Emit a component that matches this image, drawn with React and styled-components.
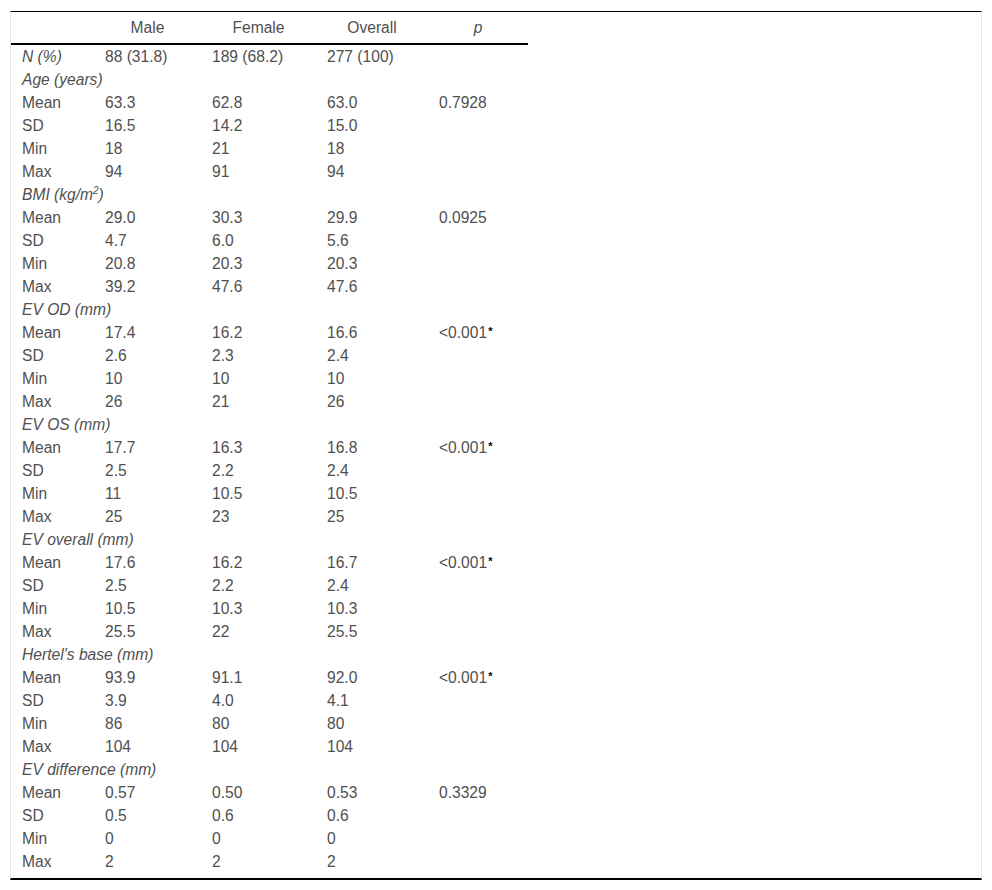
import React from "react";
import styled, { createGlobalStyle } from "styled-components";

const GlobalStyle = createGlobalStyle`
  body {
    margin: 0;
    background: #fff;
    font-family: "Liberation Sans", Arial, sans-serif;
  }
`;

const Page = styled.div`
  padding: 11px 10px;
`;

const Frame = styled.div`
  width: 970px;
  border-top: 1px solid #000;
  border-bottom: 2px solid #000;
  border-left: 1px solid #e6e6e6;
  border-right: 1px solid #e6e6e6;
  padding-bottom: 5px;
`;

const Table = styled.table`
  border-collapse: collapse;
  table-layout: fixed;
  width: 517px;
  font-size: 15.6px;
  color: #505050;
`;

const Th = styled.th`
  height: 31px;
  padding: 0;
  font-weight: normal;
  text-align: center;
  font-style: ${(p) => (p.$italic ? "italic" : "normal")};
  border-bottom: 2px solid #000;
  vertical-align: middle;
`;

const Td = styled.td`
  height: 23px;
  box-sizing: border-box;
  padding: 0 0 0 11px;
  line-height: 23px;
  white-space: nowrap;
  font-style: ${(p) => (p.$italic ? "italic" : "normal")};
`;

const Sup = styled.span`
  position: relative;
  top: -6px;
  font-size: 10px;
  line-height: 0;
`;

const Star = styled.span`
  position: relative;
  top: -3px;
  color: #000;
  font-weight: bold;
  font-size: 11px;
  line-height: 0;
  margin-left: 1px;
`;

const groups = [
  {
    title: "Age (years)",
    rows: [
      ["Mean", "63.3", "62.8", "63.0", "0.7928"],
      ["SD", "16.5", "14.2", "15.0"],
      ["Min", "18", "21", "18"],
      ["Max", "94", "91", "94"],
    ],
  },
  {
    title: (
      <>
        BMI (kg/m<Sup>2</Sup>)
      </>
    ),
    rows: [
      ["Mean", "29.0", "30.3", "29.9", "0.0925"],
      ["SD", "4.7", "6.0", "5.6"],
      ["Min", "20.8", "20.3", "20.3"],
      ["Max", "39.2", "47.6", "47.6"],
    ],
  },
  {
    title: "EV OD (mm)",
    rows: [
      ["Mean", "17.4", "16.2", "16.6", "<0.001", true],
      ["SD", "2.6", "2.3", "2.4"],
      ["Min", "10", "10", "10"],
      ["Max", "26", "21", "26"],
    ],
  },
  {
    title: "EV OS (mm)",
    rows: [
      ["Mean", "17.7", "16.3", "16.8", "<0.001", true],
      ["SD", "2.5", "2.2", "2.4"],
      ["Min", "11", "10.5", "10.5"],
      ["Max", "25", "23", "25"],
    ],
  },
  {
    title: "EV overall (mm)",
    rows: [
      ["Mean", "17.6", "16.2", "16.7", "<0.001", true],
      ["SD", "2.5", "2.2", "2.4"],
      ["Min", "10.5", "10.3", "10.3"],
      ["Max", "25.5", "22", "25.5"],
    ],
  },
  {
    title: "Hertel’s base (mm)",
    rows: [
      ["Mean", "93.9", "91.1", "92.0", "<0.001", true],
      ["SD", "3.9", "4.0", "4.1"],
      ["Min", "86", "80", "80"],
      ["Max", "104", "104", "104"],
    ],
  },
  {
    title: "EV difference (mm)",
    rows: [
      ["Mean", "0.57", "0.50", "0.53", "0.3329"],
      ["SD", "0.5", "0.6", "0.6"],
      ["Min", "0", "0", "0"],
      ["Max", "2", "2", "2"],
    ],
  },
];

function App() {
  return (
    <Page>
      <GlobalStyle />
      <Frame>
        <Table>
          <colgroup>
            <col style={{ width: 83 }} />
            <col style={{ width: 107 }} />
            <col style={{ width: 115 }} />
            <col style={{ width: 112 }} />
            <col style={{ width: 100 }} />
          </colgroup>
          <thead>
            <tr>
              <Th />
              <Th>Male</Th>
              <Th>Female</Th>
              <Th>Overall</Th>
              <Th $italic>p</Th>
            </tr>
          </thead>
          <tbody>
            <tr>
              <Td $italic>N (%)</Td>
              <Td>88 (31.8)</Td>
              <Td>189 (68.2)</Td>
              <Td>277 (100)</Td>
              <Td />
            </tr>
            {groups.map((g, i) => (
              <React.Fragment key={i}>
                <tr>
                  <Td $italic colSpan={5}>
                    {g.title}
                  </Td>
                </tr>
                {g.rows.map((r) => (
                  <tr key={r[0]}>
                    <Td>{r[0]}</Td>
                    <Td>{r[1]}</Td>
                    <Td>{r[2]}</Td>
                    <Td>{r[3]}</Td>
                    <Td>
                      {r[4]}
                      {r[5] && <Star>*</Star>}
                    </Td>
                  </tr>
                ))}
              </React.Fragment>
            ))}
          </tbody>
        </Table>
      </Frame>
    </Page>
  );
}

export default App;
